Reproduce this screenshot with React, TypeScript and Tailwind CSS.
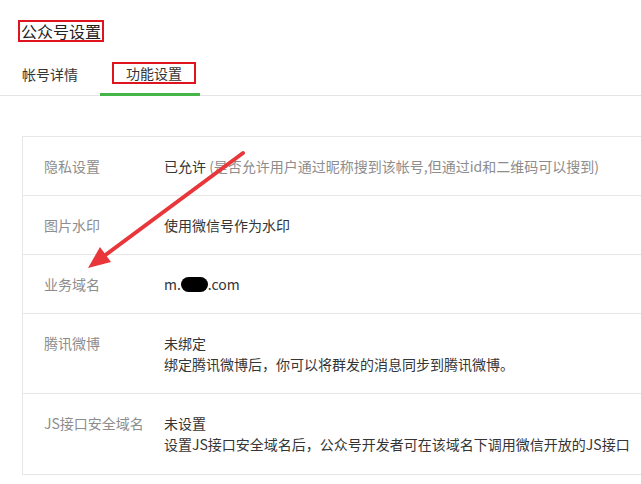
import React from "react";

const font = { fontFamily: '"Noto Sans CJK SC", "Noto Sans", sans-serif' };

function Row({ label, children, last }: { label: string; children: React.ReactNode; last?: boolean }) {
  return (
    <div className={`flex pt-[19px] ${last ? "pb-[19px]" : "pb-[18px] border-b border-[#e7e7e7]"}`}>
      <div className="w-[141px] shrink-0 pl-[21px] text-[14px] leading-[21px] text-[#8d8d8d]">{label}</div>
      <div className="text-[14px] leading-[21px] text-[#353535]">{children}</div>
    </div>
  );
}

export default function App() {
  return (
    <div className="relative w-[641px] h-[484px] bg-white overflow-hidden" style={font}>
      <div className="flex pt-[20px] pl-[18px]">
        <div className="border-2 border-[#e0141e] px-[1px] text-[16px] leading-[18px] text-[#222]">
          公众号设置
        </div>
      </div>
      <div className="mt-[20px] flex border-b border-[#e4e4e4] h-[34px]">
        <div className="w-[100px] pl-[22px] pt-[2px] text-[14px] leading-[20px] text-[#353535]">帐号详情</div>
        <div className="relative w-[100px] flex justify-center pl-[8px]">
          <div className="h-[22px] w-[84px] border-2 border-[#e0141e] text-center text-[14px] leading-[18px] text-[#353535]">
            功能设置
          </div>
          <div className="absolute left-0 right-0 bottom-[-1px] h-[3px] bg-[#44b549]" />
        </div>
      </div>
      <div className="mt-[40px] ml-[22px] border-l border-t border-b border-[#e7e7e7] w-[640px]">
        <Row label="隐私设置">
          已允许 <span className="text-[#8d8d8d]">(是否允许用户通过昵称搜到该帐号,但通过id和二维码可以搜到)</span>
        </Row>
        <Row label="图片水印">使用微信号作为水印</Row>
        <Row label="业务域名">
          <span className="inline-flex items-center">
            m.
            <span className="inline-block w-[27px] h-[15px] rounded-full bg-black" />
            .com
          </span>
        </Row>
        <Row label="腾讯微博">
          <div>未绑定</div>
          <div>绑定腾讯微博后，你可以将群发的消息同步到腾讯微博。</div>
        </Row>
        <Row label="JS接口安全域名" last>
          <div>未设置</div>
          <div>设置JS接口安全域名后，公众号开发者可在该域名下调用微信开放的JS接口</div>
        </Row>
      </div>
      <svg className="absolute left-0 top-0 pointer-events-none" width="641" height="484">
        <line x1="243" y1="153" x2="104" y2="256" stroke="#e8363a" strokeWidth="4" strokeLinecap="round" />
        <polygon points="88,268 111,262 100,247" fill="#e8363a" />
      </svg>
    </div>
  );
}
